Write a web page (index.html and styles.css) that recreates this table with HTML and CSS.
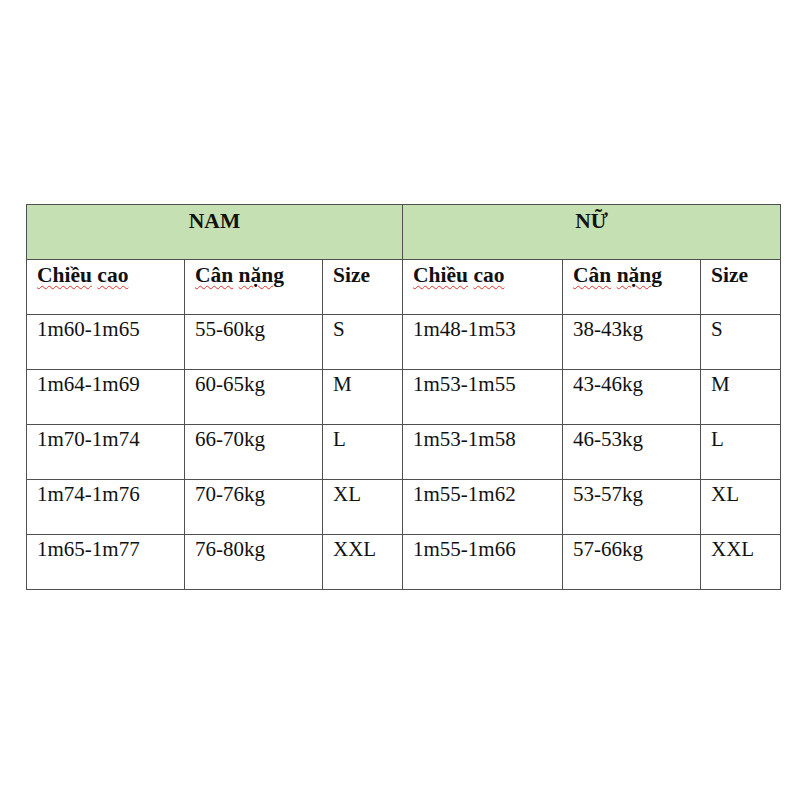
FILE: index.html
```html
<!DOCTYPE html>
<html lang="vi">
<head>
<meta charset="utf-8">
<link rel="stylesheet" href="styles.css">
</head>
<body>
<div class="page">
<table class="size-table">
  <colgroup>
    <col class="c1"><col class="c2"><col class="c3"><col class="c4"><col class="c5"><col class="c6">
  </colgroup>
  <tr class="group-row">
    <th colspan="3">NAM</th>
    <th colspan="3">NỮ</th>
  </tr>
  <tr class="head-row">
    <td><span class="spell">Chiều</span> <span class="spell">cao</span></td>
    <td><span class="spell">Cân</span> <span class="spell">nặng</span></td>
    <td>Size</td>
    <td><span class="spell">Chiều</span> <span class="spell">cao</span></td>
    <td><span class="spell">Cân</span> <span class="spell">nặng</span></td>
    <td>Size</td>
  </tr>
  <tr class="data-row"><td>1m60-1m65</td><td>55-60kg</td><td>S</td><td>1m48-1m53</td><td>38-43kg</td><td>S</td></tr>
  <tr class="data-row"><td>1m64-1m69</td><td>60-65kg</td><td>M</td><td>1m53-1m55</td><td>43-46kg</td><td>M</td></tr>
  <tr class="data-row"><td>1m70-1m74</td><td>66-70kg</td><td>L</td><td>1m53-1m58</td><td>46-53kg</td><td>L</td></tr>
  <tr class="data-row"><td>1m74-1m76</td><td>70-76kg</td><td>XL</td><td>1m55-1m62</td><td>53-57kg</td><td>XL</td></tr>
  <tr class="data-row"><td>1m65-1m77</td><td>76-80kg</td><td>XXL</td><td>1m55-1m66</td><td>57-66kg</td><td>XXL</td></tr>
</table>
</div>
</body>
</html>
```
FILE: styles.css
```css
html, body {
  margin: 0;
  padding: 0;
  background: #ffffff;
}
.page {
  padding: 204px 0 0 26px;
}
.size-table {
  border-collapse: collapse;
  table-layout: fixed;
  width: 755px;
  font-family: "Liberation Serif", "Times New Roman", serif;
  font-size: 21px;
  color: #111;
}
.c1 { width: 158px; }
.c2 { width: 138px; }
.c3 { width: 80px; }
.c4 { width: 160px; }
.c5 { width: 138px; }
.c6 { width: 80px; }
.size-table th,
.size-table td {
  border: 1px solid #505050;
  vertical-align: top;
  text-align: left;
  padding: 2px 10px 0 10px;
  line-height: 24px;
}
.group-row th {
  background: #c5e0b3;
  height: 55px;
  text-align: center;
  font-weight: bold;
  font-size: 21.5px;
  padding-top: 4px;
  box-sizing: border-box;
}
.head-row td {
  font-weight: bold;
  font-size: 21.5px;
  height: 55px;
  padding-top: 3px;
  box-sizing: border-box;
}
.data-row td {
  height: 55px;
  box-sizing: border-box;
}
.spell {
  text-decoration: underline wavy #e0312b;
  text-decoration-thickness: 1px;
  text-underline-offset: 3px;
}
```
